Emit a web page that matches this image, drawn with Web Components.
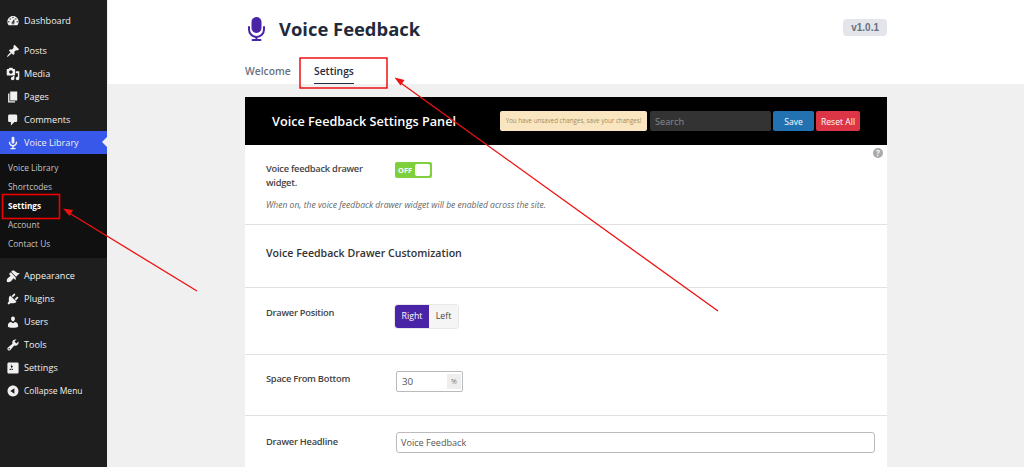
<!DOCTYPE html>
<html>
<head>
<meta charset="utf-8">
<title>Voice Feedback Settings</title>
<style>
html, body { margin: 0; height: 467px; overflow: hidden; background: #f0f0f1; }
body { position: relative; display: flex; font-family: "Open Sans", "Noto Sans", sans-serif; }
</style>
</head>
<body>
<wp-sidebar>
  <wp-item icon="dashboard" class="first">Dashboard</wp-item>
  <wp-item icon="pin" class="gap">Posts</wp-item>
  <wp-item icon="media">Media</wp-item>
  <wp-item icon="page">Pages</wp-item>
  <wp-item icon="comment">Comments</wp-item>
  <wp-item icon="mic" active>Voice Library</wp-item>
  <wp-submenu>
    <wp-subitem>Voice Library</wp-subitem>
    <wp-subitem>Shortcodes</wp-subitem>
    <wp-subitem current>Settings</wp-subitem>
    <wp-subitem>Account</wp-subitem>
    <wp-subitem>Contact Us</wp-subitem>
  </wp-submenu>
  <wp-item icon="brush">Appearance</wp-item>
  <wp-item icon="plug">Plugins</wp-item>
  <wp-item icon="user">Users</wp-item>
  <wp-item icon="wrench">Tools</wp-item>
  <wp-item icon="sliders">Settings</wp-item>
  <wp-item icon="collapse" small>Collapse Menu</wp-item>
</wp-sidebar>

<vf-page>
  <vf-header slot="header" version="v1.0.1"></vf-header>
  <vf-panel>
    <vf-row label="Voice feedback drawer widget." note="When on, the voice feedback drawer widget will be enabled across the site." help pad="17">
      <vf-toggle></vf-toggle>
    </vf-row>
    <vf-heading>Voice Feedback Drawer Customization</vf-heading>
    <vf-row label="Drawer Position" pad="18" height="66"><vf-segmented></vf-segmented></vf-row>
    <vf-row label="Space From Bottom" pad="17" height="60"><vf-number value="30" unit="%"></vf-number></vf-row>
    <vf-row label="Drawer Headline" pad="19" height="60"><vf-text value="Voice Feedback"></vf-text></vf-row>
  </vf-panel>
</vf-page>

<vf-annotations></vf-annotations>

<script>
const ICONS = {
  dashboard: "M3.76 16h12.48c1.1-1.37 1.76-3.11 1.76-5 0-4.42-3.58-8-8-8s-8 3.58-8 8c0 1.89.66 3.63 1.76 5zM10 4c.55 0 1 .45 1 1s-.45 1-1 1-1-.45-1-1 .45-1 1-1zM6 6c.55 0 1 .45 1 1s-.45 1-1 1-1-.45-1-1 .45-1 1-1zm8 0c.55 0 1 .45 1 1s-.45 1-1 1-1-.45-1-1 .45-1 1-1zm-5.37 5.55L12 7v6c0 1.1-.9 2-2 2s-2-.9-2-2c0-.57.24-1.08.63-1.45zM4 10c.55 0 1 .45 1 1s-.45 1-1 1-1-.45-1-1 .45-1 1-1zm12 0c.55 0 1 .45 1 1s-.45 1-1 1-1-.45-1-1 .45-1 1-1zm-5 3c0-.55-.45-1-1-1s-1 .45-1 1 .45 1 1 1 1-.45 1-1z",
  pin: "M10.44 3.02l1.82-1.82 6.36 6.35-1.83 1.82c-1.05-.68-2.48-.57-3.41.36l-.75.75c-.92.93-1.04 2.35-.35 3.41l-1.83 1.82-2.41-2.41-2.8 2.79c-.42.42-3.38 2.71-3.8 2.29s1.86-3.39 2.28-3.81l2.79-2.79L4.1 9.36l1.83-1.82c1.05.69 2.48.57 3.4-.36l.75-.75c.93-.92 1.05-2.35.36-3.41z",
  media: "M13 11V4c0-.55-.45-1-1-1h-1.67L9 1H5L3.67 3H2c-.55 0-1 .45-1 1v7c0 .55.45 1 1 1h10c.55 0 1-.45 1-1zM7 4.5c1.38 0 2.5 1.12 2.5 2.5S8.38 9.5 7 9.5 4.5 8.38 4.5 7 5.62 4.5 7 4.5zM14 6h5v10.5c0 1.38-1.12 2.5-2.5 2.5S14 17.88 14 16.5s1.12-2.5 2.5-2.5c.17 0 .34.02.5.05V9h-3V6zm-4 8.05V13h2v3.5c0 1.38-1.12 2.5-2.5 2.5S7 17.88 7 16.5 8.12 14 9.5 14c.17 0 .34.02.5.05z",
  page: "M6 15V2h10v13H6zm-1 1h8v2H3V5h2v11z",
  comment: "M5 2h9c1.1 0 2 .9 2 2v7c0 1.1-.9 2-2 2h-2l-5 5v-5H5c-1.1 0-2-.9-2-2V4c0-1.1.9-2 2-2z",
  mic: "M12 9V3c0-1.1-.89-2-2-2-1.12 0-2 .94-2 2v6c0 1.1.9 2 2 2 1.1 0 2-.9 2-2zm4 0c0 2.97-2.16 5.43-5 5.91V17h2c.56 0 1 .45 1 1s-.44 1-1 1H7c-.55 0-1-.45-1-1s.45-1 1-1h2v-2.09C6.17 14.43 4 11.97 4 9c0-.55.45-1 1-1 .56 0 1 .45 1 1 0 2.21 1.8 4 4 4 2.21 0 4-1.79 4-4 0-.55.45-1 1-1 .56 0 1 .45 1 1z",
  brush: "M14.48 11.06L7.41 3.99l1.5-1.5c.5-.56 2.3-.47 3.51.32 1.21.8 1.43 1.28 2.91 2.1 1.18.64 2.45 1.26 4.45.85zm-.71.71L6.7 4.7 4.93 6.47c-.39.39-.39 1.02 0 1.41l1.06 1.06c.39.39.39 1.03 0 1.42-.6.6-1.43 1.11-2.21 1.69-.35.26-.7.53-1.01.84C1.43 13.78.8 16.2 1.3 18.7c2.5.5 4.92-.13 6.3-1.47.31-.31.58-.66.84-1.01.58-.78 1.09-1.61 1.69-2.21.39-.39 1.03-.39 1.42 0l1.06 1.06c.39.39 1.02.39 1.41 0z",
  plug: "M13.11 4.36L9.87 7.6 8 5.73l3.24-3.24c.35-.34 1.05-.2 1.56.32.52.51.66 1.21.31 1.55zm-8 1.77l.91-1.12 9.01 9.01-1.19.84c-.71.71-2.63 1.16-3.82 1.16H6.14L4.9 17.26c-.59.59-1.54.59-2.12 0-.59-.58-.59-1.53 0-2.12l1.24-1.24v-3.88c0-1.13.4-3.19 1.09-3.89zm7.26 3.97l3.24-3.24c.34-.35 1.04-.21 1.55.31.52.51.66 1.21.31 1.55l-3.24 3.25z",
  user: "M10 9.25c-2.27 0-2.73-3.44-2.73-3.44C7 4.02 7.82 2 9.97 2c2.16 0 2.98 2.02 2.71 3.81 0 0-.41 3.44-2.68 3.44zm0 2.57L12.72 10c2.39 0 4.52 2.33 4.52 4.53v2.49s-3.65 1.13-7.24 1.13c-3.65 0-7.24-1.13-7.24-1.13v-2.49c0-2.25 1.94-4.48 4.47-4.48z",
  wrench: "M16.68 9.77c-1.34 1.34-3.3 1.67-4.95.99l-5.41 6.52c-.99.99-2.59.99-3.58 0s-.99-2.59 0-3.57l6.52-5.42c-.68-1.65-.35-3.61.99-4.95 1.28-1.28 3.12-1.62 4.72-1.06l-2.89 2.89 2.82 2.82 2.86-2.87c.53 1.58.18 3.39-1.08 4.65zM3.81 16.21c.4.39 1.04.39 1.43 0 .4-.4.4-1.04 0-1.43-.39-.4-1.03-.4-1.43 0-.39.39-.39 1.03 0 1.43z",
  sliders: "M18 16V4c0-1.1-.9-2-2-2H4c-1.1 0-2 .9-2 2v12c0 1.1.9 2 2 2h12c1.1 0 2-.9 2-2zM8 11h1c.55 0 1 .45 1 1s-.45 1-1 1H8v1.5c0 .28-.22.5-.5.5s-.5-.22-.5-.5V13H6c-.55 0-1-.45-1-1s.45-1 1-1h1V5.5c0-.28.22-.5.5-.5s.5.22.5.5V7h1c.55 0 1 .45 1 1s-.45 1-1 1h-1v5.5c0 .28-.22.5-.5.5s-.5-.22-.5-.5V9z",
  collapse: "M10 2.16c4.33 0 7.84 3.51 7.84 7.84s-3.51 7.84-7.84 7.84S2.16 14.33 2.16 10 5.71 2.16 10 2.16zm2 11.72V6.12L6.18 9.97z"
};

function shadow(el, html) {
  el.attachShadow({ mode: "open" }).innerHTML = html;
}

class WpSidebar extends HTMLElement {
  connectedCallback() {
    shadow(this, `<style>
      :host { display: block; flex: none; width: 108px; height: 467px; background: #1e1e1e; padding-top: 9px; box-sizing: border-box; border-right: 1px solid #f0f0f1; }
    </style><slot></slot>`);
  }
}

class WpItem extends HTMLElement {
  connectedCallback() {
    const active = this.hasAttribute("active");
    // Dashboard sits apart from the rest of the menu
    const after = this.classList.contains("first") ? 7 : 0;
    const size = this.hasAttribute("small") ? 8.5 : 9.1;
    shadow(this, `<style>
      :host { display: block; margin-bottom: ${after}px; }
      .row { position: relative; display: flex; align-items: center; height: 23px; padding-left: 5.5px; color: #f0f0f1; font-size: ${size}px; background: ${active ? "#3858e9" : "none"}; }
      svg { width: 14px; height: 14px; margin-right: 4.5px; fill: #f0f0f1; flex: none; }
      .tip { position: absolute; right: 0; top: 6px; border: 5.5px solid transparent; border-right-color: #f0f0f1; border-left: 0; }
    </style><div class="row"><svg viewBox="0 0 20 20"><path fill-rule="evenodd" d="${ICONS[this.getAttribute("icon")]}"/></svg><slot></slot>${active ? '<i class="tip"></i>' : ""}</div>`);
  }
}

class WpSubmenu extends HTMLElement {
  connectedCallback() {
    shadow(this, `<style>
      :host { display: block; background: #101010; padding: 4px 0 5px; margin-bottom: 6px; }
    </style><slot></slot>`);
  }
}

class WpSubitem extends HTMLElement {
  connectedCallback() {
    const cur = this.hasAttribute("current");
    shadow(this, `<style>
      :host { display: block; height: 19px; line-height: 20px; padding-left: 8px; font-size: ${cur ? 8.2 : 8.4}px; color: ${cur ? "#fff" : "#c3c4c7"}; font-weight: ${cur ? 700 : 400}; }
    </style><slot></slot>`);
  }
}

class VfPage extends HTMLElement {
  connectedCallback() {
    shadow(this, `<style>
      :host { display: block; flex: 1; min-width: 0; }
      .body { margin: 13px 0 0 137px; width: 642px; }
    </style><slot name="header"></slot><div class="body"><slot></slot></div>`);
  }
}

class VfHeader extends HTMLElement {
  connectedCallback() {
    shadow(this, `<style>
      :host { display: block; height: 84px; background: #fff; padding: 0 137px; box-sizing: border-box; color: #1d2b3f; }
      .top { display: flex; align-items: center; height: 57px; }
      svg { width: 17px; height: 24px; margin: 0 14px 0 3px; flex: none; }
      h1 { margin: 0; font-size: 18.4px; font-weight: 700; flex: 1; color: #1f2a3c; }
      .ver { background: #e3e5ea; color: #68707e; font: 700 10px "Liberation Sans", sans-serif; border-radius: 4px; padding: 3px 8px; height: 11px; line-height: 11px; margin-bottom: 2px; }
      nav { display: flex; font-size: 10.3px; font-weight: 600; }
      a { display: block; height: 27px; line-height: 29px; box-sizing: border-box; }
      .off { color: #6a7280; width: 69px; }
      .on { color: #1f2a3c; position: relative; }
      .on::after { content: ""; position: absolute; left: 0; right: 0; bottom: 0; height: 1px; background: #1f2a3c; }
    </style>
    <div class="top">
      <svg viewBox="0 0 17 24"><rect x="3.5" y="0" width="10" height="16" rx="5" fill="#4a24a6"/><path d="M1 10v2.5a7.5 7.5 0 0 0 15 0V10M8.5 20v3M4.5 23h8" fill="none" stroke="#4a24a6" stroke-width="2" stroke-linecap="round"/></svg>
      <h1>Voice Feedback</h1>
      <span class="ver">${this.getAttribute("version")}</span>
    </div>
    <nav><a class="off">Welcome</a><a class="on">Settings</a></nav>`);
  }
}

class VfPanel extends HTMLElement {
  connectedCallback() {
    shadow(this, `<style>
      :host { display: block; background: #fff; color: #444; }
      .bar { display: flex; align-items: center; height: 48px; background: #000; padding: 0 27px; color: #fff; }
      h2 { margin: 0; font-size: 12.7px; font-weight: 600; flex: 1; white-space: nowrap; }
      .notice { width: 147px; height: 20px; line-height: 20px; box-sizing: border-box; background: #f9e6c0; color: #a08a60; font-size: 6.2px; border-radius: 2px; text-align: center; white-space: nowrap; }
      .search { width: 121px; height: 20px; line-height: 21px; margin-left: 3px; box-sizing: border-box; padding-left: 5px; background: #333; color: #8b8b8b; font-size: 9.2px; border-radius: 2px; }
      button { height: 20px; border: 0; padding: 1px 0 0; color: #fff; font: 8.6px "Open Sans", sans-serif; border-radius: 2px; }
      .save { width: 41px; margin-left: 2px; background: #2271b1; }
      .reset { width: 44px; margin-left: 2px; background: #dc3545; }
    </style>
    <div class="bar">
      <h2>Voice Feedback Settings Panel</h2>
      <div class="notice">You have unsaved changes, save your changes!</div>
      <div class="search">Search</div>
      <button class="save">Save</button>
      <button class="reset">Reset All</button>
    </div><slot></slot>`);
  }
}

class VfRow extends HTMLElement {
  connectedCallback() {
    const note = this.getAttribute("note");
    const h = this.getAttribute("height");
    shadow(this, `<style>
      :host { display: block; position: relative; border-bottom: 1px solid #e1e1e1; box-sizing: content-box; ${h ? `height: ${h}px;` : ""} }
      .wrap { padding: ${this.getAttribute("pad")}px 12px 0 21px; }
      .line { display: flex; }
      label { width: 129px; flex: none; box-sizing: border-box; padding-right: 20px; font-size: 9.3px; letter-spacing: -.25px; font-weight: 600; line-height: 14px; color: #444; }
      .ctl { flex: 1; min-width: 0; }
      .note { font-size: 8.55px; font-style: italic; color: #666; margin: 9px 0 13px; white-space: nowrap; }
      .help { position: absolute; right: 4px; top: 3px; width: 10px; height: 10px; line-height: 10px; border-radius: 50%; background: #aaa; color: #fff; font-size: 8px; font-weight: 700; text-align: center; }
    </style>
    <div class="wrap"><div class="line"><label>${this.getAttribute("label")}</label><div class="ctl"><slot></slot></div></div>
    ${note ? `<div class="note">${note}</div>` : ""}</div>
    ${this.hasAttribute("help") ? '<span class="help">?</span>' : ""}`);
  }
}

class VfHeading extends HTMLElement {
  connectedCallback() {
    shadow(this, `<style>
      :host { display: block; height: 62px; line-height: 57px; padding-left: 21px; border-bottom: 1px solid #e1e1e1; font-size: 10.6px; font-weight: 600; color: #333; }
    </style><slot></slot>`);
  }
}

class VfToggle extends HTMLElement {
  connectedCallback() {
    shadow(this, `<style>
      :host { display: block; width: 37px; height: 16px; background: #7ed03c; border-radius: 2px; position: relative; color: #fff; font-size: 7.4px; font-weight: 700; line-height: 16px; padding-left: 3px; box-sizing: border-box; }
      i { position: absolute; right: 2px; top: 2px; width: 15px; height: 12px; background: #fff; border-radius: 2px; }
    </style>OFF<i></i>`);
  }
}

class VfSegmented extends HTMLElement {
  connectedCallback() {
    shadow(this, `<style>
      :host { display: flex; width: max-content; height: 23px; line-height: 23px; margin-top: -1px; font-size: 8.8px; border-radius: 3px; box-shadow: 0 0 0 1px #e8e8e8; }
      span { display: block; text-align: center; }
      .a { width: 34px; background: #4a24a6; color: #fff; border-radius: 3px 0 0 3px; }
      .b { width: 29px; background: #f5f5f5; color: #444; border-radius: 0 3px 3px 0; }
    </style><span class="a">Right</span><span class="b">Left</span>`);
  }
}

class VfNumber extends HTMLElement {
  connectedCallback() {
    shadow(this, `<style>
      :host { display: flex; align-items: center; justify-content: space-between; width: 67px; height: 21px; margin: -1px 0 0 1px; box-sizing: border-box; border: 1px solid #bbb; border-radius: 2px; padding: 0 1px 0 5px; font-size: 9.8px; color: #555; }
      b { width: 14px; height: 15px; line-height: 15px; background: #eee; color: #777; font-size: 7px; font-weight: 400; text-align: center; }
    </style>${this.getAttribute("value")}<b>${this.getAttribute("unit")}</b>`);
  }
}

class VfText extends HTMLElement {
  connectedCallback() {
    shadow(this, `<style>
      :host { display: block; height: 21px; line-height: 19px; margin: -3px 0 0 1px; box-sizing: border-box; border: 1px solid #bbb; border-radius: 3px; padding-left: 4px; font-size: 9.1px; color: #555; }
    </style>${this.getAttribute("value")}`);
  }
}

// the red callouts drawn on top of the screenshot
class VfAnnotations extends HTMLElement {
  connectedCallback() {
    shadow(this, `<style>
      :host { position: absolute; left: 0; top: 0; width: 1024px; height: 467px; pointer-events: none; }
      svg { display: block; }
    </style>
    <svg width="1024" height="467" fill="none" stroke="#ee1111">
      <rect x="2.5" y="194.5" width="57" height="24" stroke="#e00" stroke-width="1.6"/>
      <rect x="300" y="58" width="87" height="30" stroke="#e00" stroke-width="1.4"/>
      <path d="M197 291L66 211" stroke-width="1.3"/>
      <path d="M63 208.500l10 1.500-3.500 6z" fill="#ee1111" stroke="none"/>
      <path d="M718 311L398 81" stroke-width="1.3"/>
      <path d="M394.500 77.500l10 2.500-4 5.500z" fill="#ee1111" stroke="none"/>
    </svg>`);
  }
}

customElements.define("wp-sidebar", WpSidebar);
customElements.define("wp-item", WpItem);
customElements.define("wp-submenu", WpSubmenu);
customElements.define("wp-subitem", WpSubitem);
customElements.define("vf-page", VfPage);
customElements.define("vf-header", VfHeader);
customElements.define("vf-panel", VfPanel);
customElements.define("vf-row", VfRow);
customElements.define("vf-heading", VfHeading);
customElements.define("vf-toggle", VfToggle);
customElements.define("vf-segmented", VfSegmented);
customElements.define("vf-number", VfNumber);
customElements.define("vf-text", VfText);
customElements.define("vf-annotations", VfAnnotations);
</script>
</body>
</html>
